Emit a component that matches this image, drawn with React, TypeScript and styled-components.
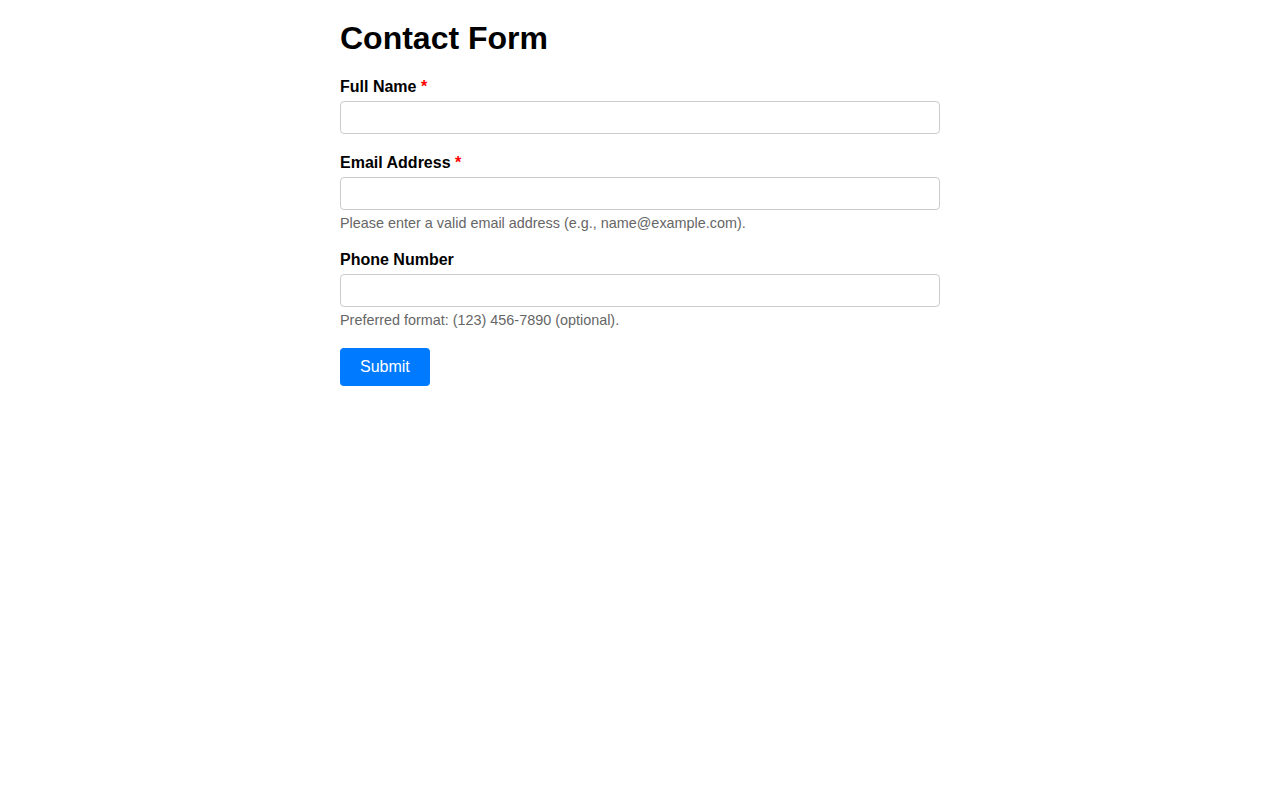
import React from "react";
import styled, { createGlobalStyle } from "styled-components";

const Global = createGlobalStyle`
  html, body { margin: 0; padding: 0; background: #fff; }
  body { font-family: "Liberation Sans", Arial, sans-serif; color: #000; }
  * { box-sizing: border-box; }
`;

const Container = styled.div`
  max-width: 600px;
  margin: 0 auto;
  padding-top: 20px;
`;

const Title = styled.h1`
  font-size: 32px;
  font-weight: bold;
  margin: 0 0 21px;
`;

const Form = styled.form`
  display: flex;
  flex-direction: column;
  align-items: stretch;
`;

const Group = styled.div`
  display: flex;
  flex-direction: column;
  margin-bottom: 20px;
`;

const Label = styled.label`
  font-size: 16px;
  font-weight: bold;
  margin-bottom: 5px;
`;

const Required = styled.span`
  color: red;
`;

const Input = styled.input`
  width: 100%;
  height: 33px;
  padding: 6px 8px;
  border: 1px solid #ccc;
  border-radius: 4px;
  font-family: inherit;
  font-size: 16px;
  outline: none;
`;

const Help = styled.small`
  font-size: 14.4px;
  color: #666;
  margin-top: 5px;
`;

const Button = styled.button`
  align-self: flex-start;
  background: #007bff;
  color: #fff;
  border: none;
  border-radius: 4px;
  padding: 10px 20px;
  font-family: inherit;
  font-size: 16px;
  line-height: 18px;
  cursor: pointer;
`;

export default function App() {
  return (
    <>
      <Global />
      <Container>
        <Title>Contact Form</Title>
        <Form onSubmit={(e) => e.preventDefault()}>
          <Group>
            <Label htmlFor="name">
              Full Name <Required>*</Required>
            </Label>
            <Input id="name" type="text" />
          </Group>
          <Group>
            <Label htmlFor="email">
              Email Address <Required>*</Required>
            </Label>
            <Input id="email" type="email" />
            <Help>Please enter a valid email address (e.g., name@example.com).</Help>
          </Group>
          <Group>
            <Label htmlFor="phone">Phone Number</Label>
            <Input id="phone" type="tel" />
            <Help>Preferred format: (123) 456-7890 (optional).</Help>
          </Group>
          <Button type="submit">Submit</Button>
        </Form>
      </Container>
    </>
  );
}
